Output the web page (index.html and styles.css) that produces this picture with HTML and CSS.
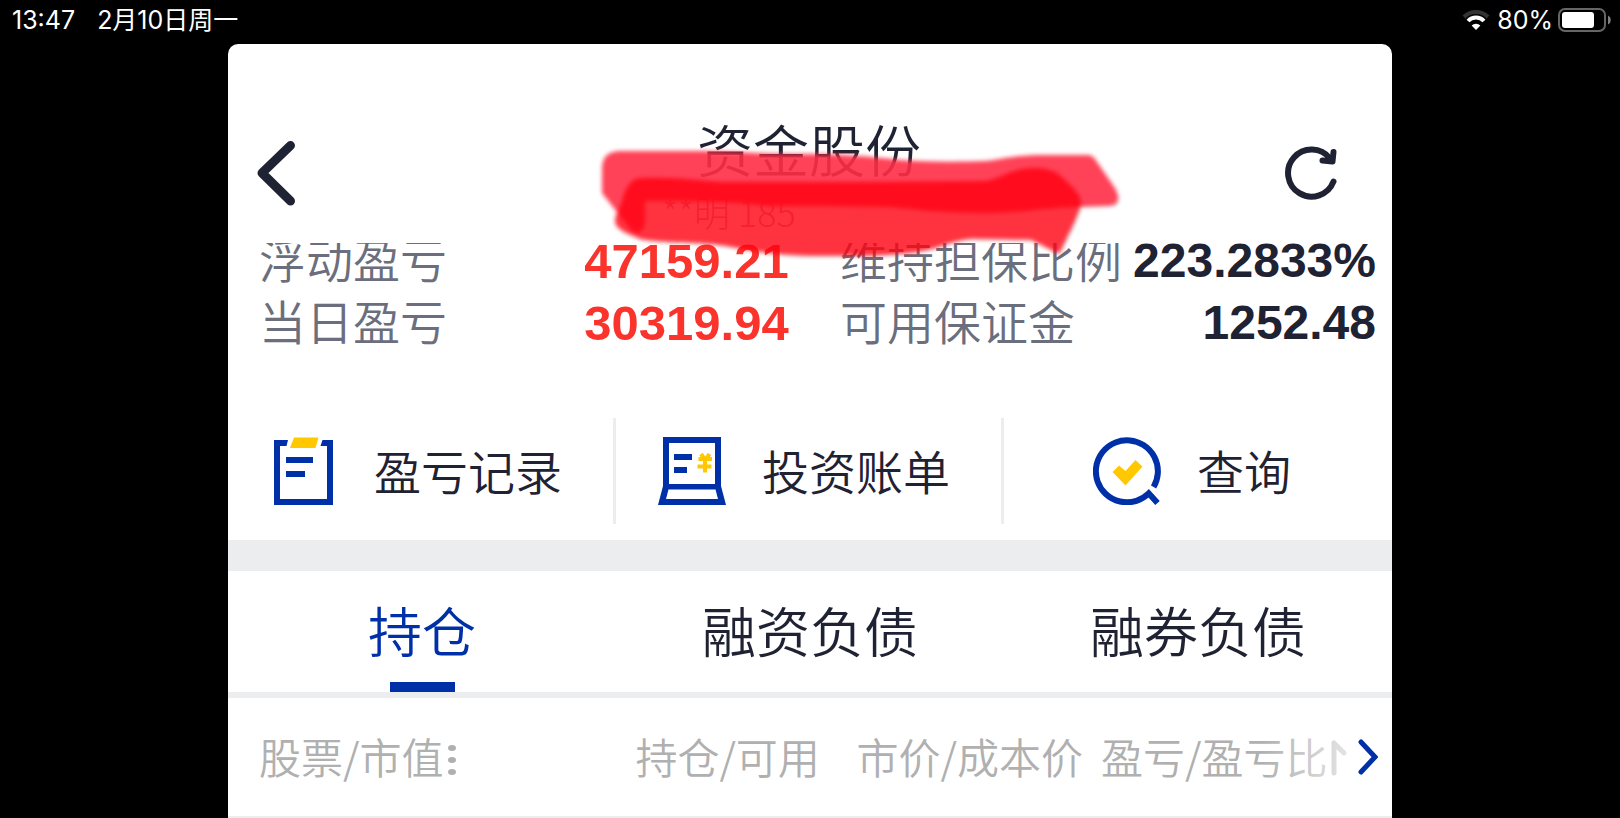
FILE: index.html
```html
<!DOCTYPE html>
<html lang="zh-CN">
<head>
    <meta charset="UTF-8">
    <meta name="viewport" content="width=device-width, initial-scale=1.0">
    <title>资金股份</title>
    <link rel="stylesheet" href="styles.css">
</head>
<body>
    <div class="status">
        <span class="time">13:47</span>
        <span class="date">2月10日周一</span>
        <svg class="wifi" width="28" height="22" viewBox="0 0 28 22" aria-hidden="true">
            <path d="M2 8 A17 17 0 0 1 26 8" fill="none" stroke="#333" stroke-width="4"/>
            <path d="M6 12 A11 11 0 0 1 22 12" fill="none" stroke="#fff" stroke-width="4"/>
            <path d="M14 21 L9.600 16.500 A6.200 6.200 0 0 1 18.400 16.500 Z" fill="#fff"/>
        </svg>
        <span>80%</span>
        <svg class="battery" width="54" height="24" viewBox="0 0 54 24" aria-hidden="true">
            <rect x="1" y="1" width="46" height="22" rx="6" fill="none" stroke="#666" stroke-width="2"/>
            <rect x="4" y="4" width="32" height="16" rx="3" fill="#fff"/>
            <path d="M50 7.500 A5 5 0 0 1 50 16.500 Z" fill="#808080"/>
        </svg>
    </div>

    <div class="app">
        <div class="header">
            <button class="back" type="button" aria-label="返回">
                <svg width="40" height="68" viewBox="0 0 40 68"><path d="M34.500 6.500 L6 34 L34.500 62" fill="none" stroke="#1f2233" stroke-width="9" stroke-linecap="round" stroke-linejoin="round"/></svg>
            </button>
            <div class="title">
                <h1>资金股份</h1>
                <p>**明 185</p>
            </div>
            <button class="refresh" type="button" aria-label="刷新">
                <svg width="54" height="54" viewBox="0 0 54 54"><g fill="none" stroke="#1f2233" stroke-width="6" stroke-linecap="round" stroke-linejoin="round"><path d="M48.500 35.500 A23.500 23.500 0 1 1 45 12.500"/><path d="M48.500 6 L47.500 15.500 L37.500 14.500"/><path d="M43 11.500 L46 14"/></g></svg>
            </button>
            <svg class="marker" width="530" height="120" viewBox="594 140 530 120" aria-hidden="true">
                <path d="M602 168 C602 156 608 150 621 150 L700 150 C740 151 765 153 800 153 C840 153 865 155 900 159 C930 161 955 161 985 160 C1003 158 1010 155 1036 154 L1088 154 Q1092 154 1095 158 L1115 187 C1121 198 1119 205 1108 205 L1081 206 C1050 206 1020 212 990 212 C930 212 910 207 885 206 C840 205 800 205 765 205 C730 200 690 200 645 200 L645 222 Q642 236 632 230 L602 192 Z" fill="#ff2e46" fill-opacity="0.9"/>
                <path d="M640 177 C680 176 700 180 721 181 L865 181 L985 180 C1000 178 1010 168 1032 167 C1046 167 1056 169 1064 178 Q1082 194 1081 202 C1080 214 1065 240 1061 250 Q1058 255 1053 250 L1031 239 L971 238 C950 240 940 248 911 252 C880 256 848 255 820 255 C780 255 750 250 731 246 C700 240 660 243 640 238 C625 232 616 228 615 221 C615 212 619 211 622 200 C625 188 630 178 640 177 Z" fill="#ff0010" fill-opacity="0.8"/>
            </svg>
        </div>

        <div class="summary">
            <dl>
                <div class="left"><dt>浮动盈亏</dt><dd>47159.21</dd></div>
                <div class="right"><dt>维持担保比例</dt><dd>223.2833%</dd></div>
                <div class="left"><dt>当日盈亏</dt><dd>30319.94</dd></div>
                <div class="right"><dt>可用保证金</dt><dd>1252.48</dd></div>
            </dl>
        </div>

        <div class="actions">
            <button type="button">
                <svg width="68" height="68" viewBox="0 0 68 68" aria-hidden="true">
                    <path d="M4 3 H18 L16.500 9 H10 V62 H57 V9 H50.500 L52.500 3 H63 V68 H4 Z" fill="#0030a8"/>
                    <path d="M24 0.500 H48.500 L45.500 11 H20 Z" fill="#ffc800"/>
                    <path d="M16 20 H43 V26 H16 Z M16 34 H35 V40 H16 Z" fill="#0030a8"/>
                </svg>
                <span>盈亏记录</span>
            </button>
            <button type="button">
                <svg width="68" height="68" viewBox="0 0 68 68" aria-hidden="true">
                    <path fill-rule="evenodd" d="M5 0 H63 V49 L68 68 H0 L5 49 Z M11 6 V47 H57 V6 Z M10.500 52.500 L8 62 H60 L57.500 52.500 Z" fill="#0030a8"/>
                    <path d="M16 17 H34 V23 H16 Z M16 30 H29 V36 H16 Z" fill="#0030a8"/>
                    <path d="M43 17 L46.500 22 M51.500 17 L48 22 M40.500 22 H54 M39.500 29.500 H53.500 M47 22 V35.500" fill="none" stroke="#ffc800" stroke-width="4"/>
                </svg>
                <span>投资账单</span>
            </button>
            <button type="button">
                <svg width="68" height="68" viewBox="0 0 68 68" aria-hidden="true">
                    <path d="M60.600 50 A31 31 0 1 0 55.700 56.300 L64.500 66" fill="none" stroke="#0030a8" stroke-width="6"/>
                    <path d="M19.500 35 L26 28.500 L32.500 34 L42.500 23 L49.500 29.500 L32.500 48.500 Z" fill="#ffc800"/>
                </svg>
                <span>查询</span>
            </button>
        </div>

        <div class="tabs">
            <button class="active" type="button">持仓</button>
            <button type="button">融资负债</button>
            <button type="button">融券负债</button>
        </div>

        <div class="list">
            <table>
                <tr>
                    <th>股票/市值<svg width="10" height="32" viewBox="0 0 10 32" aria-hidden="true"><g fill="#b0b0b0"><ellipse cx="5" cy="4" rx="4" ry="3"/><ellipse cx="5" cy="16" rx="4" ry="3"/><ellipse cx="5" cy="28" rx="4" ry="3"/></g></svg></th>
                    <th>持仓/可用</th>
                    <th>市价/成本价</th>
                    <th>盈亏/盈亏比<svg width="16" height="36" viewBox="0 0 16 36" aria-hidden="true"><path d="M3 3 V33 M3 3 L13 13" fill="none" stroke="#b0b0b0" stroke-width="5" stroke-linecap="round"/></svg></th>
                </tr>
            </table>
            <div class="fade">
                <button type="button" aria-label="更多">
                    <svg width="20" height="36" viewBox="0 0 20 36"><path d="M3 3 L17 18 L3 33" fill="none" stroke="#0030a8" stroke-width="5" stroke-linecap="round"/></svg>
                </button>
            </div>
        </div>
    </div>
</body>
</html>
```

FILE: styles.css
```css
*{
    box-sizing: border-box;
    margin: 0;
    padding: 0;
}
body{
    background-color: #000;
    color: #1f2233;
    font-family: "Noto Sans CJK SC", sans-serif;
    font-weight: 350;
}
button{
    border: 0;
    background: none;
    color: inherit;
    font: inherit;
    cursor: pointer;
}
svg{
    display: block;
    flex: none;
}

/* status bar */
.status{
    display: flex;
    align-items: center;
    height: 44px;
    padding: 0 8px 4px 12px;
    color: #fff;
    font-family: Inter, "Noto Sans CJK SC", sans-serif;
    font-size: 25px;
    font-weight: 400;
    line-height: 30px;
}
.date{
    margin-left: 22px;
}
.wifi{
    margin-left: auto;
    margin-right: 7px;
}
.battery{
    margin-left: 5px;
}

.app{
    margin: 0 228px;
    background-color: #fff;
    border-radius: 10px 10px 0 0;
}

/* title bar */
.header{
    position: relative;
    display: flex;
    height: 199px;
    padding: 69px 53px 0 28px;
}
.back{
    height: 68px;
    margin-top: 26px;
}
.refresh{
    height: 54px;
    margin-top: 33px;
}
.title{
    flex: 1;
    margin-left: 37px;
    text-align: center;
}
.title h1{
    font-size: 56px;
    font-weight: 350;
    line-height: 70px;
}
.title p{
    margin: 8px 160px 0 0;
    color: #d0a0a8;
    font-size: 36px;
    font-weight: 300;
    line-height: 40px;
}
.marker{
    position: absolute;
    left: 366px;
    top: 97px;
    z-index: 1;
    overflow: visible;
    filter: blur(2px);
}

/* profit and margin figures, scrolled partly under the title bar */
.summary{
    overflow: hidden;
    padding: 0 16px 65px 31px;
}
.summary dl{
    display: grid;
    grid-template-columns: 581fr 536fr;
    margin-top: -14px;
}
.summary dl div{
    display: flex;
    height: 62px;
    white-space: nowrap;
}
.summary dt{
    color: #6b6e7d;
    font-size: 47px;
    line-height: 58px;
}
.summary dd{
    font-family: "Liberation Sans", Arial, sans-serif;
    font-size: 49px;
    font-weight: bold;
    line-height: 64px;
}
.left dt{
    width: 56%;
}
.left dd{
    color: #fa342d;
}
.right{
    justify-content: space-between;
}
.summary .right dd{
    font-size: 48px;
}

.actions{
    display: grid;
    grid-template-columns: 1fr 1fr 1fr;
    padding-bottom: 16px;
    border-bottom: 31px solid #ebedef;
}
.actions button{
    display: flex;
    align-items: center;
    justify-content: center;
    gap: 36px;
    height: 106px;
    padding-right: 9px;
    border-right: 3px solid #ebedef;
    font-size: 47px;
}
.actions span{
    padding-bottom: 4px;
}
.actions button:last-child{
    border-color: transparent;
}

.tabs{
    display: grid;
    grid-template-columns: 1fr 1fr 1fr;
    border-bottom: 3px solid #ebedef;
}
.tabs button{
    display: flex;
    flex-direction: column;
    align-items: center;
    justify-content: space-between;
    height: 121px;
    font-size: 54px;
    line-height: 117px;
}
.tabs .active{
    color: #0030a8;
}
.active::after{
    content: "";
    width: 65px;
    height: 10px;
    margin-top: -10px;
    background-color: #0030a8;
}

/* column heads of the holdings list */
.list{
    position: relative;
    overflow: hidden;
    border-top: 3px solid #ebedef;
    border-bottom: 2px solid #ebedef;
}
table{
    width: 100%;
    table-layout: fixed;
    border-collapse: collapse;
}
th{
    width: 19%;
    height: 118px;
    padding-bottom: 4px;
    color: #b0b0b0;
    font-size: 42px;
    font-weight: 350;
    text-align: left;
    white-space: nowrap;
}
th:first-child{
    width: 35%;
    padding-left: 31px;
}
th:nth-child(3){
    width: 21%;
}
th:last-child{
    width: 25%;
}
th svg{
    display: inline-block;
    margin-left: 4px;
    vertical-align: -2px;
}
.fade{
    position: absolute;
    top: -3px;
    right: 0;
    bottom: -2px;
    display: flex;
    align-items: center;
    justify-content: flex-end;
    width: 130px;
    padding-right: 14px;
    background: linear-gradient(to right, rgba(255,255,255,0), #fff);
}
```
